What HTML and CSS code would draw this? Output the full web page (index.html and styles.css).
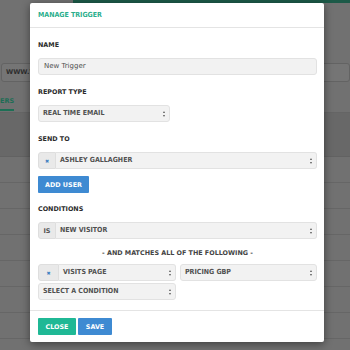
FILE: index.html
```html
<!DOCTYPE html>
<html lang="en">
<head>
  <meta charset="UTF-8">
  <meta name="viewport" content="width=device-width, initial-scale=1.0">
  <title>Manage Trigger</title>
  <link rel="stylesheet" href="styles.css">
</head>
<body>
  <div class="page">
    <div class="topbar"></div>
    <div class="url-box">WWW.V</div>
    <div class="tabs"><span class="tab active">ERS</span></div>
    <div class="band"></div>
    <div class="list-row"></div>
    <div class="list-row"></div>
    <div class="list-row"></div>
    <div class="list-row"></div>
    <div class="list-row"></div>
    <div class="list-row"></div>
    <div class="list-row"></div>
  </div>

  <div class="modal">
    <div class="modal-header">MANAGE TRIGGER</div>
    <div class="modal-body">
      <label>NAME</label>
      <div class="input">New Trigger</div>

      <label class="gap">REPORT TYPE</label>
      <div class="select w-report">REAL TIME EMAIL <span class="arrows"></span></div>

      <label class="gap">SEND TO</label>
      <div class="group">
        <span class="addon x">&#x2716;</span>
        <div class="select grow">ASHLEY GALLAGHER <span class="arrows"></span></div>
      </div>
      <button class="btn btn-blue add-user">ADD USER</button>

      <label class="gap cond">CONDITIONS</label>
      <div class="group">
        <span class="addon">IS</span>
        <div class="select grow">NEW VISITOR <span class="arrows"></span></div>
      </div>

      <div class="matches">- AND MATCHES ALL OF THE FOLLOWING -</div>

      <div class="cond-row">
        <div class="group half">
          <span class="addon x wide">&#x2716;</span>
          <div class="select grow">VISITS PAGE <span class="arrows"></span></div>
        </div>
        <div class="select grow">PRICING GBP <span class="arrows"></span></div>
      </div>
      <div class="select w-cond">SELECT A CONDITION <span class="arrows"></span></div>
    </div>
    <div class="modal-footer">
      <button class="btn btn-teal">CLOSE</button>
      <button class="btn btn-blue">SAVE</button>
    </div>
  </div>
</body>
</html>
```

FILE: styles.css
```css
body { margin: 0; background: #717171; font-family: "DejaVu Sans", sans-serif; overflow: hidden; }
.page { height: 350px; }
.topbar { height: 3px; margin-left: 73px; background: #1c5a48; }
.url-box { margin: 60px 0 0 1px; height: 17px; border: 1px solid #636363; border-radius: 3px; background: #757575; color: #2e2e2e; font-size: 6.5px; font-weight: bold; line-height: 17px; padding-left: 4px; }
.tabs { height: 30px; border-bottom: 1px solid #656565; }
.tab { display: inline-block; margin-top: 15px; padding-bottom: 4px; border-bottom: 2px solid #1d6f55; color: #1e6d55; font-size: 6.5px; font-weight: bold; }
.band { height: 43px; background: #686868; border-bottom: 1px solid #626262; }
.list-row { height: 25px; border-bottom: 1px solid #666; }
.list-row:first-of-type { height: 31px; }

.modal { position: absolute; left: 30px; top: 3px; width: 294px; height: 339px; background: #fff; border-radius: 2px; box-shadow: 0 2px 8px rgba(0,0,0,0.45); display: flex; flex-direction: column; }
.modal-header { height: 24px; line-height: 25px; padding-left: 8px; color: #2aae8c; font-family: "DejaVu Sans Condensed", "DejaVu Sans", sans-serif; font-weight: bold; font-size: 7px; border-bottom: 1px solid #e4e4e4; }
.modal-body { padding: 13px 7px 10px 8px; display: flex; flex-direction: column; align-items: flex-start; border-bottom: 1px solid #e4e4e4; }
label { display: block; font-size: 6.4px; font-weight: bold; color: #2b2b2b; line-height: 8px; margin-bottom: 9px; }
label.gap { margin-top: 13px; }
label.cond { margin-top: 12px; }

.input, .select { box-sizing: border-box; height: 17px; line-height: 15px; background: #f2f2f2; border: 1px solid #e2e2e2; border-radius: 3px; color: #505050; }
.input { width: 100%; padding-left: 5px; font-size: 7px; }
.select { position: relative; padding-left: 4px; font-family: "DejaVu Sans Condensed", "DejaVu Sans", sans-serif; font-weight: bold; font-size: 7px; }
.arrows { position: absolute; right: 4px; top: 5px; width: 0; height: 0; border-left: 1.5px solid transparent; border-right: 1.5px solid transparent; border-bottom: 2.5px solid #555; }
.arrows::after { content: ""; position: absolute; left: -1.5px; top: 3.5px; border-left: 1.5px solid transparent; border-right: 1.5px solid transparent; border-top: 2.5px solid #555; }
.w-report { width: 132px; }
.w-cond { width: 138px; margin-top: 2px; }

.group { display: flex; width: 100%; }
.grow { flex: 1; }
.addon { box-sizing: border-box; width: 18px; height: 17px; line-height: 16px; text-align: center; background: #e9e9e9; border: 1px solid #dedede; border-radius: 3px 0 0 3px; font-size: 6.5px; font-weight: bold; color: #555; }
.addon.wide { width: 21px; }
.addon.x { color: #3e7fc1; font-size: 5px; }
.group .select { border-radius: 0 3px 3px 0; border-left: none; }

.btn { box-sizing: border-box; height: 17px; border: none; border-radius: 1px; color: #fff; font-family: "DejaVu Sans", sans-serif; font-weight: bold; font-size: 6.4px; padding: 0 4px; cursor: pointer; }
.btn-blue { background: #3e8ad2; }
.btn-teal { background: #1fb895; }
.add-user { margin-top: 7px; width: 51px; }

.matches { align-self: stretch; text-align: center; margin-top: 9px; line-height: 10px; font-size: 6.4px; font-weight: bold; color: #444; }
.cond-row { display: flex; gap: 4px; width: 100%; margin-top: 6px; }
.cond-row .half { width: 138px; flex: none; }

.modal-footer { padding: 7px 8px; display: flex; gap: 2px; }
.modal-footer .btn-teal { width: 38px; }
.modal-footer .btn-blue { width: 34px; }
```
